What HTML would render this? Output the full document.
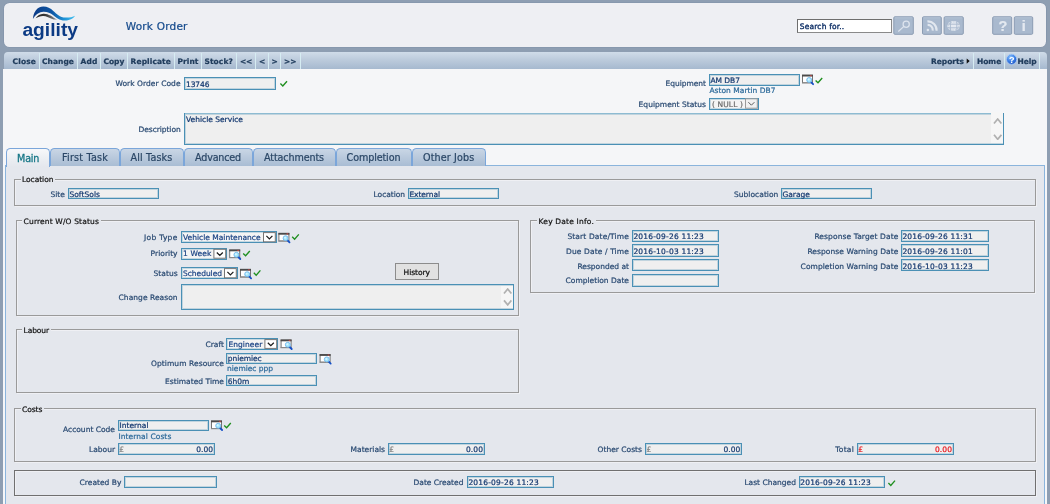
<!DOCTYPE html><html><head><meta charset="utf-8"><title>Work Order</title><style>
html,body{margin:0;padding:0}body{width:1050px;height:504px;overflow:hidden;position:relative;background:#8e9eb2;font-family:'DejaVu Sans','Liberation Sans',sans-serif;}
.t{position:absolute;white-space:nowrap;line-height:1;-webkit-text-stroke:0.22px currentColor;}
#tx{position:absolute;left:0;top:0;width:1050px;height:504px;will-change:transform;transform:translateZ(0);}
</style></head><body>
<div style="position:absolute;left:3.60px;top:2.80px;width:1042.80px;height:43.80px;background:#eeeff3;border-radius:5.5px;box-shadow:0 0 0 0.6px #8091a8;"></div>
<svg style="position:absolute;left:0;top:0" width="90" height="24" viewBox="0 0 90 24">
<defs><linearGradient id="g1" gradientUnits="userSpaceOnUse" x1="33" x2="75" y1="0" y2="0"><stop offset="0" stop-color="#0b3a86"/><stop offset="0.45" stop-color="#0d56a4"/><stop offset="0.75" stop-color="#1f93d6"/><stop offset="1" stop-color="#3fc0f0"/></linearGradient>
<linearGradient id="g2" gradientUnits="userSpaceOnUse" x1="35" x2="57" y1="0" y2="0"><stop offset="0" stop-color="#1c1c1c"/><stop offset="0.5" stop-color="#3a3a3a"/><stop offset="1" stop-color="#8d9299"/></linearGradient></defs>
<path d="M32.9 19 C33.2 15 34.3 12.6 35.6 10.8 C37.6 8 40.4 6.6 43.4 6.6 C47.4 6.6 50.4 8.4 53.3 11 C56.6 13.9 59.6 17.4 65.7 17.6 C69.4 17.7 72.6 17 75.2 15.7 C73.6 18 70.4 20.4 65 20.5 C59.4 20.6 56.4 17.6 53.3 15.2 C50.4 13 47.4 11.7 43.4 11.8 C39.4 11.9 35.4 14.8 32.9 19 Z" fill="url(#g1)"/>
<path d="M35.6 18.2 C37.6 15.6 40 13.8 43.4 13.7 C46.4 13.6 48.4 14.4 50.4 15.6 C52.8 17 54.8 18.6 57.2 19.6 C54.8 19.7 52.8 19.2 51 18.4 C48.6 17.3 46.4 16 43.4 15.9 C40.4 15.8 37.8 16.8 35.6 18.2 Z" fill="url(#g2)"/>
</svg>
<div style="position:absolute;left:797.00px;top:19.00px;width:95.00px;height:14.00px;box-sizing:border-box;background:#fff;border:1px solid #8a8a8a;border-top-color:#6e6e6e;border-left-color:#6e6e6e;"></div>
<svg style="position:absolute;left:0;top:0" width="1050" height="50" viewBox="0 0 1050 50"><rect x="893.8" y="16.8" width="19.5" height="17.5" rx="1.1" fill="#a9b9ce" stroke="#8b9cb3" stroke-width="1"/><line x1="894.8" y1="17.8" x2="912.3" y2="17.8" stroke="#b4c2d4" stroke-width="1"/><rect x="922.5" y="16.8" width="18.799999999999955" height="17.5" rx="1.1" fill="#a9b9ce" stroke="#8b9cb3" stroke-width="1"/><line x1="923.5" y1="17.8" x2="940.3" y2="17.8" stroke="#b4c2d4" stroke-width="1"/><rect x="944.1" y="16.8" width="19.199999999999932" height="17.5" rx="1.1" fill="#a9b9ce" stroke="#8b9cb3" stroke-width="1"/><line x1="945.1" y1="17.8" x2="962.3" y2="17.8" stroke="#b4c2d4" stroke-width="1"/><rect x="992.7" y="16.8" width="19.0" height="17.5" rx="1.1" fill="#a9b9ce" stroke="#8b9cb3" stroke-width="1"/><line x1="993.7" y1="17.8" x2="1010.7" y2="17.8" stroke="#b4c2d4" stroke-width="1"/><rect x="1014.3" y="16.8" width="18.40000000000009" height="17.5" rx="1.1" fill="#a9b9ce" stroke="#8b9cb3" stroke-width="1"/><line x1="1015.3" y1="17.8" x2="1031.7" y2="17.8" stroke="#b4c2d4" stroke-width="1"/><circle cx="906.2" cy="24.2" r="3.1" fill="none" stroke="#dde4ee" stroke-width="1.25"/><line x1="903.9" y1="26.4" x2="898.3" y2="31.5" stroke="#dde4ee" stroke-width="1.25"/><g fill="none" stroke="#e1e7ef" stroke-width="2.1"><path d="M927.6 24.9 A5 5 0 0 1 932.7 30.6"/><path d="M927.4 21.4 A8.8 8.8 0 0 1 936.6 30.8"/></g><circle cx="927.9" cy="29.9" r="1.25" fill="#e1e7ef"/><g><ellipse cx="953.6" cy="26" rx="6.4" ry="5.1" fill="#e4e9f1"/><g stroke="#a9b9ce" stroke-width="0.9"><line x1="946" y1="24.2" x2="961" y2="24.2"/><line x1="946" y1="27.8" x2="961" y2="27.8"/><line x1="950.4" y1="20" x2="950.4" y2="32"/><line x1="956.8" y1="20" x2="956.8" y2="32"/></g><ellipse cx="953.6" cy="26" rx="5.4" ry="4.1" fill="none" stroke="#a9b9ce" stroke-width="0.8" stroke-dasharray="1.2 1.2"/></g></svg>
<div style="position:absolute;left:3.00px;top:68.50px;width:1044.00px;height:435.50px;background:#f5f6f8;"></div>
<div style="position:absolute;left:3.80px;top:52.30px;width:1043.00px;height:16.40px;background:linear-gradient(#d0dce9,#bccbdc 45%,#a6b9cf);border-radius:4px 4px 0 0;"></div>
<div style="position:absolute;left:38.90px;top:52.60px;width:1.00px;height:16.10px;background:#d6ecf2;"></div>
<div style="position:absolute;left:76.90px;top:52.60px;width:1.00px;height:16.10px;background:#d6ecf2;"></div>
<div style="position:absolute;left:99.90px;top:52.60px;width:1.00px;height:16.10px;background:#d6ecf2;"></div>
<div style="position:absolute;left:126.90px;top:52.60px;width:1.00px;height:16.10px;background:#d6ecf2;"></div>
<div style="position:absolute;left:173.50px;top:52.60px;width:1.00px;height:16.10px;background:#d6ecf2;"></div>
<div style="position:absolute;left:200.50px;top:52.60px;width:1.00px;height:16.10px;background:#d6ecf2;"></div>
<div style="position:absolute;left:236.10px;top:52.60px;width:1.00px;height:16.10px;background:#d6ecf2;"></div>
<div style="position:absolute;left:255.10px;top:52.60px;width:1.00px;height:16.10px;background:#d6ecf2;"></div>
<div style="position:absolute;left:267.50px;top:52.60px;width:1.00px;height:16.10px;background:#d6ecf2;"></div>
<div style="position:absolute;left:280.10px;top:52.60px;width:1.00px;height:16.10px;background:#d6ecf2;"></div>
<div style="position:absolute;left:299.90px;top:52.60px;width:1.00px;height:16.10px;background:#d6ecf2;"></div>
<div style="position:absolute;left:972.90px;top:52.60px;width:1.00px;height:16.10px;background:#d6ecf2;"></div>
<div style="position:absolute;left:1004.10px;top:52.60px;width:1.00px;height:16.10px;background:#d6ecf2;"></div>
<div style="position:absolute;left:1039.00px;top:52.60px;width:1.00px;height:16.10px;background:#d6ecf2;"></div>
<svg style="position:absolute;left:965px;top:58px" width="6" height="8" viewBox="0 0 6 8"><path d="M1.7 0.4 L4.7 3.1 L1.7 5.8 Z" fill="#111"/></svg>
<svg style="position:absolute;left:1004px;top:52px;will-change:transform" width="16" height="16" viewBox="1004 52 16 16"><defs><radialGradient id="hg" cx="0.4" cy="0.3" r="0.75"><stop offset="0" stop-color="#8cc4ff"/><stop offset="0.55" stop-color="#3b7fe6"/><stop offset="1" stop-color="#1b50c0"/></radialGradient></defs><circle cx="1011.6" cy="59.3" r="5.1" fill="url(#hg)" stroke="#a9cdf6" stroke-width="0.8"/><text x="1011.7" y="62.6" font-family="Liberation Sans,sans-serif" font-weight="bold" font-size="9.2" fill="#fff" text-anchor="middle">?</text></svg>
<div style="position:absolute;left:184.00px;top:77.30px;width:92.00px;height:12.30px;box-sizing:border-box;background:#efefef;border:1px solid #4a90b5;box-shadow:inset 0 0 0 1px rgba(74,144,181,.28);"></div>
<svg style="position:absolute;left:279px;top:80px" width="10" height="9" viewBox="0 0 10 9"><g transform="translate(0.60 0.40)"><path d="M0.8 3.2 L3.2 5.6 L7.4 0.8" fill="none" stroke="#1f8f1f" stroke-width="1.35"/></g></svg>
<div style="position:absolute;left:184.00px;top:112.60px;width:820.00px;height:32.00px;box-sizing:border-box;background:#efefef;border:1px solid #4a90b5;box-shadow:inset 0 0 0 1px rgba(74,144,181,.28);"></div>
<div style="position:absolute;left:185.00px;top:112.60px;width:818.00px;height:1.00px;background:#8dbbd2;"></div>
<div style="position:absolute;left:991.30px;top:112.00px;width:11.70px;height:31.40px;background:#f6f6f6;"></div>
<svg style="position:absolute;left:992.60px;top:117.60px" width="9.4" height="22.30" viewBox="-1 -1 9.4 22.30"><path d="M0 4.5 L3.7 0 L7.4 4.5" fill="none" stroke="#b0b0b0" stroke-width="1.7"/><path d="M0 15.800000000000011 L3.7 20.30000000000001 L7.4 15.800000000000011" fill="none" stroke="#b0b0b0" stroke-width="1.7"/></svg>
<div style="position:absolute;left:709.00px;top:74.00px;width:90.60px;height:11.70px;box-sizing:border-box;background:#efefef;border:1px solid #4a90b5;box-shadow:inset 0 0 0 1px rgba(74,144,181,.28);"></div>
<svg style="position:absolute;left:802px;top:74px" width="14" height="13" viewBox="0 0 14 13"><g transform="translate(0.00 0.70)"><rect x="0.5" y="0.5" width="10" height="7.6" fill="#fff" stroke="#747474" stroke-width="1"/><line x1="0" y1="8.1" x2="11" y2="8.1" stroke="#8a8a8a" stroke-width="1"/><rect x="0" y="0" width="11" height="1.8" fill="#4a4a4a"/><rect x="8.2" y="0.4" width="1.5" height="1.1" fill="#c44"/><line x1="9.1" y1="7.5" x2="11.1" y2="9.5" stroke="#1450c8" stroke-width="1.8" stroke-linecap="round"/><circle cx="7.2" cy="5.3" r="2.5" fill="#a6e6fb" stroke="#6ab0ea" stroke-width="0.8"/><circle cx="6.7" cy="4.8" r="1" fill="#d6f6ff"/></g></svg>
<svg style="position:absolute;left:814px;top:77px" width="10" height="9" viewBox="0 0 10 9"><g transform="translate(0.80 0.20)"><path d="M0.8 3.2 L3.2 5.6 L7.4 0.8" fill="none" stroke="#1f8f1f" stroke-width="1.35"/></g></svg>
<div style="position:absolute;left:709.00px;top:97.50px;width:49.60px;height:12.00px;box-sizing:border-box;background:#f4f4f4;border:1px solid #4a90b5;box-shadow:inset 0 0 0 1px rgba(74,144,181,.28);"></div>
<svg style="position:absolute;left:0;top:0" width="1050" height="504" viewBox="0 0 1050 504"><rect x="745.50" y="98.80" width="11.80" height="9.40" fill="#f1f1f1" stroke="#9a9a9a" stroke-width="1"/><path d="M748.40 102.20 l3 3 l3 -3" fill="none" stroke="#5a5a5a" stroke-width="1.0"/></svg>
<div style="position:absolute;left:5.00px;top:165.40px;width:1039.60px;height:338.60px;box-sizing:border-box;background:#e4e7ed;border:1px solid #8ab4dc;border-bottom:none;"></div>
<div style="position:absolute;left:50.30px;top:148.20px;width:69.30px;height:17.40px;box-sizing:border-box;border:1px solid #7ba6da;border-bottom:none;border-radius:4.5px 4.5px 0 0;background:linear-gradient(#c9d6e5,#b9c9dc 50%,#a9bdd4);"></div>
<div style="position:absolute;left:119.60px;top:148.20px;width:64.00px;height:17.40px;box-sizing:border-box;border:1px solid #7ba6da;border-bottom:none;border-radius:4.5px 4.5px 0 0;background:linear-gradient(#c9d6e5,#b9c9dc 50%,#a9bdd4);"></div>
<div style="position:absolute;left:183.60px;top:148.20px;width:69.20px;height:17.40px;box-sizing:border-box;border:1px solid #7ba6da;border-bottom:none;border-radius:4.5px 4.5px 0 0;background:linear-gradient(#c9d6e5,#b9c9dc 50%,#a9bdd4);"></div>
<div style="position:absolute;left:252.80px;top:148.20px;width:82.80px;height:17.40px;box-sizing:border-box;border:1px solid #7ba6da;border-bottom:none;border-radius:4.5px 4.5px 0 0;background:linear-gradient(#c9d6e5,#b9c9dc 50%,#a9bdd4);"></div>
<div style="position:absolute;left:335.60px;top:148.20px;width:76.20px;height:17.40px;box-sizing:border-box;border:1px solid #7ba6da;border-bottom:none;border-radius:4.5px 4.5px 0 0;background:linear-gradient(#c9d6e5,#b9c9dc 50%,#a9bdd4);"></div>
<div style="position:absolute;left:411.80px;top:148.20px;width:73.80px;height:17.40px;box-sizing:border-box;border:1px solid #7ba6da;border-bottom:none;border-radius:4.5px 4.5px 0 0;background:linear-gradient(#c9d6e5,#b9c9dc 50%,#a9bdd4);"></div>
<div style="position:absolute;left:6.00px;top:148.20px;width:44.30px;height:18.40px;box-sizing:border-box;border:1px solid #7ba6da;border-bottom:none;border-radius:4.5px 4.5px 0 0;background:linear-gradient(#f7f8fa,#eceff3 50%,#e4e7ed);"></div>
<div style="position:absolute;left:14.20px;top:179.00px;width:1021.60px;height:27.00px;box-sizing:border-box;border:1px solid #9a9a9a;box-shadow:inset 1px 1px 0 rgba(255,255,255,.4), 1px 1px 0 rgba(255,255,255,.4);"></div>
<div style="position:absolute;left:20.50px;top:177.00px;width:34.90px;height:5.00px;background:#e4e7ed;"></div>
<div style="position:absolute;left:68.00px;top:188.30px;width:90.60px;height:10.60px;box-sizing:border-box;background:#efefef;border:1px solid #4a90b5;box-shadow:inset 0 0 0 1px rgba(74,144,181,.28);"></div>
<div style="position:absolute;left:408.00px;top:188.30px;width:91.00px;height:10.60px;box-sizing:border-box;background:#efefef;border:1px solid #4a90b5;box-shadow:inset 0 0 0 1px rgba(74,144,181,.28);"></div>
<div style="position:absolute;left:781.00px;top:188.30px;width:90.60px;height:10.60px;box-sizing:border-box;background:#efefef;border:1px solid #4a90b5;box-shadow:inset 0 0 0 1px rgba(74,144,181,.28);"></div>
<div style="position:absolute;left:15.80px;top:220.20px;width:503.00px;height:95.40px;box-sizing:border-box;border:1px solid #9a9a9a;box-shadow:inset 1px 1px 0 rgba(255,255,255,.4), 1px 1px 0 rgba(255,255,255,.4);"></div>
<div style="position:absolute;left:22.10px;top:218.20px;width:78.90px;height:5.00px;background:#e4e7ed;"></div>
<div style="position:absolute;left:181.00px;top:231.30px;width:95.60px;height:11.80px;box-sizing:border-box;background:#f4f4f4;border:1px solid #4a90b5;box-shadow:inset 0 0 0 1px rgba(74,144,181,.28);"></div>
<svg style="position:absolute;left:0;top:0" width="1050" height="504" viewBox="0 0 1050 504"><rect x="263.50" y="232.60" width="11.80" height="9.20" fill="#fff" stroke="#767676" stroke-width="1"/><path d="M266.40 235.90 l3 3 l3 -3" fill="none" stroke="#1c1c1c" stroke-width="1.25"/></svg>
<svg style="position:absolute;left:278px;top:232px" width="14" height="13" viewBox="0 0 14 13"><g transform="translate(0.40 0.90)"><rect x="0.5" y="0.5" width="10" height="7.6" fill="#fff" stroke="#747474" stroke-width="1"/><line x1="0" y1="8.1" x2="11" y2="8.1" stroke="#8a8a8a" stroke-width="1"/><rect x="0" y="0" width="11" height="1.8" fill="#4a4a4a"/><rect x="8.2" y="0.4" width="1.5" height="1.1" fill="#c44"/><line x1="9.1" y1="7.5" x2="11.1" y2="9.5" stroke="#1450c8" stroke-width="1.8" stroke-linecap="round"/><circle cx="7.2" cy="5.3" r="2.5" fill="#a6e6fb" stroke="#6ab0ea" stroke-width="0.8"/><circle cx="6.7" cy="4.8" r="1" fill="#d6f6ff"/></g></svg>
<svg style="position:absolute;left:291px;top:233px" width="10" height="9" viewBox="0 0 10 9"><g transform="translate(0.40 0.60)"><path d="M0.8 3.2 L3.2 5.6 L7.4 0.8" fill="none" stroke="#1f8f1f" stroke-width="1.35"/></g></svg>
<div style="position:absolute;left:181.00px;top:248.00px;width:46.00px;height:11.50px;box-sizing:border-box;background:#f4f4f4;border:1px solid #4a90b5;box-shadow:inset 0 0 0 1px rgba(74,144,181,.28);"></div>
<svg style="position:absolute;left:0;top:0" width="1050" height="504" viewBox="0 0 1050 504"><rect x="213.90" y="249.30" width="11.80" height="8.90" fill="#fff" stroke="#767676" stroke-width="1"/><path d="M216.80 252.45 l3 3 l3 -3" fill="none" stroke="#1c1c1c" stroke-width="1.25"/></svg>
<svg style="position:absolute;left:229px;top:249px" width="14" height="13" viewBox="0 0 14 13"><g transform="translate(0.20 0.50)"><rect x="0.5" y="0.5" width="10" height="7.6" fill="#fff" stroke="#747474" stroke-width="1"/><line x1="0" y1="8.1" x2="11" y2="8.1" stroke="#8a8a8a" stroke-width="1"/><rect x="0" y="0" width="11" height="1.8" fill="#4a4a4a"/><rect x="8.2" y="0.4" width="1.5" height="1.1" fill="#c44"/><line x1="9.1" y1="7.5" x2="11.1" y2="9.5" stroke="#1450c8" stroke-width="1.8" stroke-linecap="round"/><circle cx="7.2" cy="5.3" r="2.5" fill="#a6e6fb" stroke="#6ab0ea" stroke-width="0.8"/><circle cx="6.7" cy="4.8" r="1" fill="#d6f6ff"/></g></svg>
<svg style="position:absolute;left:242px;top:250px" width="10" height="9" viewBox="0 0 10 9"><g transform="translate(0.40 0.20)"><path d="M0.8 3.2 L3.2 5.6 L7.4 0.8" fill="none" stroke="#1f8f1f" stroke-width="1.35"/></g></svg>
<div style="position:absolute;left:181.00px;top:267.30px;width:56.60px;height:11.80px;box-sizing:border-box;background:#f4f4f4;border:1px solid #4a90b5;box-shadow:inset 0 0 0 1px rgba(74,144,181,.28);"></div>
<svg style="position:absolute;left:0;top:0" width="1050" height="504" viewBox="0 0 1050 504"><rect x="224.50" y="268.60" width="11.80" height="9.20" fill="#fff" stroke="#767676" stroke-width="1"/><path d="M227.40 271.90 l3 3 l3 -3" fill="none" stroke="#1c1c1c" stroke-width="1.25"/></svg>
<svg style="position:absolute;left:240px;top:268px" width="14" height="13" viewBox="0 0 14 13"><g transform="translate(0.00 0.90)"><rect x="0.5" y="0.5" width="10" height="7.6" fill="#fff" stroke="#747474" stroke-width="1"/><line x1="0" y1="8.1" x2="11" y2="8.1" stroke="#8a8a8a" stroke-width="1"/><rect x="0" y="0" width="11" height="1.8" fill="#4a4a4a"/><rect x="8.2" y="0.4" width="1.5" height="1.1" fill="#c44"/><line x1="9.1" y1="7.5" x2="11.1" y2="9.5" stroke="#1450c8" stroke-width="1.8" stroke-linecap="round"/><circle cx="7.2" cy="5.3" r="2.5" fill="#a6e6fb" stroke="#6ab0ea" stroke-width="0.8"/><circle cx="6.7" cy="4.8" r="1" fill="#d6f6ff"/></g></svg>
<svg style="position:absolute;left:253px;top:269px" width="10" height="9" viewBox="0 0 10 9"><g transform="translate(0.00 0.60)"><path d="M0.8 3.2 L3.2 5.6 L7.4 0.8" fill="none" stroke="#1f8f1f" stroke-width="1.35"/></g></svg>
<div style="position:absolute;left:395.00px;top:263.00px;width:44.00px;height:16.60px;box-sizing:border-box;background:#e1e1e1;border:1px solid #8c8c8c;"></div>
<div style="position:absolute;left:181.00px;top:284.40px;width:332.60px;height:25.40px;box-sizing:border-box;background:#efefef;border:1px solid #4a90b5;box-shadow:inset 0 0 0 1px rgba(74,144,181,.28);"></div>
<div style="position:absolute;left:501.30px;top:285.60px;width:11.30px;height:22.80px;background:#f6f6f6;"></div>
<svg style="position:absolute;left:502.80px;top:287.80px" width="9.4" height="17.90" viewBox="-1 -1 9.4 17.90"><path d="M0 4.5 L3.7 0 L7.4 4.5" fill="none" stroke="#b0b0b0" stroke-width="1.7"/><path d="M0 11.399999999999977 L3.7 15.899999999999977 L7.4 11.399999999999977" fill="none" stroke="#b0b0b0" stroke-width="1.7"/></svg>
<div style="position:absolute;left:530.40px;top:220.40px;width:504.20px;height:72.20px;box-sizing:border-box;border:1px solid #9a9a9a;box-shadow:inset 1px 1px 0 rgba(255,255,255,.4), 1px 1px 0 rgba(255,255,255,.4);"></div>
<div style="position:absolute;left:537.10px;top:218.40px;width:58.90px;height:5.00px;background:#e4e7ed;"></div>
<div style="position:absolute;left:632.00px;top:230.00px;width:87.00px;height:11.70px;box-sizing:border-box;background:#efefef;border:1px solid #4a90b5;box-shadow:inset 0 0 0 1px rgba(74,144,181,.28);"></div>
<div style="position:absolute;left:632.00px;top:244.40px;width:87.00px;height:12.30px;box-sizing:border-box;background:#efefef;border:1px solid #4a90b5;box-shadow:inset 0 0 0 1px rgba(74,144,181,.28);"></div>
<div style="position:absolute;left:632.00px;top:259.40px;width:87.00px;height:12.10px;box-sizing:border-box;background:#efefef;border:1px solid #4a90b5;box-shadow:inset 0 0 0 1px rgba(74,144,181,.28);"></div>
<div style="position:absolute;left:632.00px;top:274.40px;width:87.00px;height:12.30px;box-sizing:border-box;background:#efefef;border:1px solid #4a90b5;box-shadow:inset 0 0 0 1px rgba(74,144,181,.28);"></div>
<div style="position:absolute;left:901.00px;top:230.00px;width:87.60px;height:11.70px;box-sizing:border-box;background:#efefef;border:1px solid #4a90b5;box-shadow:inset 0 0 0 1px rgba(74,144,181,.28);"></div>
<div style="position:absolute;left:901.00px;top:244.40px;width:87.60px;height:12.30px;box-sizing:border-box;background:#efefef;border:1px solid #4a90b5;box-shadow:inset 0 0 0 1px rgba(74,144,181,.28);"></div>
<div style="position:absolute;left:901.00px;top:259.40px;width:87.60px;height:12.10px;box-sizing:border-box;background:#efefef;border:1px solid #4a90b5;box-shadow:inset 0 0 0 1px rgba(74,144,181,.28);"></div>
<div style="position:absolute;left:15.80px;top:329.20px;width:503.00px;height:63.80px;box-sizing:border-box;border:1px solid #9a9a9a;box-shadow:inset 1px 1px 0 rgba(255,255,255,.4), 1px 1px 0 rgba(255,255,255,.4);"></div>
<div style="position:absolute;left:22.10px;top:327.20px;width:28.90px;height:5.00px;background:#e4e7ed;"></div>
<div style="position:absolute;left:226.40px;top:338.30px;width:51.60px;height:11.40px;box-sizing:border-box;background:#f4f4f4;border:1px solid #4a90b5;box-shadow:inset 0 0 0 1px rgba(74,144,181,.28);"></div>
<svg style="position:absolute;left:0;top:0" width="1050" height="504" viewBox="0 0 1050 504"><rect x="264.90" y="339.60" width="11.80" height="8.80" fill="#fff" stroke="#767676" stroke-width="1"/><path d="M267.80 342.70 l3 3 l3 -3" fill="none" stroke="#1c1c1c" stroke-width="1.25"/></svg>
<svg style="position:absolute;left:280px;top:339px" width="14" height="13" viewBox="0 0 14 13"><g transform="translate(0.60 0.50)"><rect x="0.5" y="0.5" width="10" height="7.6" fill="#fff" stroke="#747474" stroke-width="1"/><line x1="0" y1="8.1" x2="11" y2="8.1" stroke="#8a8a8a" stroke-width="1"/><rect x="0" y="0" width="11" height="1.8" fill="#4a4a4a"/><rect x="8.2" y="0.4" width="1.5" height="1.1" fill="#c44"/><line x1="9.1" y1="7.5" x2="11.1" y2="9.5" stroke="#1450c8" stroke-width="1.8" stroke-linecap="round"/><circle cx="7.2" cy="5.3" r="2.5" fill="#a6e6fb" stroke="#6ab0ea" stroke-width="0.8"/><circle cx="6.7" cy="4.8" r="1" fill="#d6f6ff"/></g></svg>
<div style="position:absolute;left:226.40px;top:353.30px;width:91.00px;height:10.50px;box-sizing:border-box;background:#efefef;border:1px solid #4a90b5;box-shadow:inset 0 0 0 1px rgba(74,144,181,.28);"></div>
<svg style="position:absolute;left:319px;top:354px" width="14" height="13" viewBox="0 0 14 13"><g transform="translate(0.60 0.10)"><rect x="0.5" y="0.5" width="10" height="7.6" fill="#fff" stroke="#747474" stroke-width="1"/><line x1="0" y1="8.1" x2="11" y2="8.1" stroke="#8a8a8a" stroke-width="1"/><rect x="0" y="0" width="11" height="1.8" fill="#4a4a4a"/><rect x="8.2" y="0.4" width="1.5" height="1.1" fill="#c44"/><line x1="9.1" y1="7.5" x2="11.1" y2="9.5" stroke="#1450c8" stroke-width="1.8" stroke-linecap="round"/><circle cx="7.2" cy="5.3" r="2.5" fill="#a6e6fb" stroke="#6ab0ea" stroke-width="0.8"/><circle cx="6.7" cy="4.8" r="1" fill="#d6f6ff"/></g></svg>
<div style="position:absolute;left:226.40px;top:375.30px;width:91.00px;height:10.50px;box-sizing:border-box;background:#efefef;border:1px solid #4a90b5;box-shadow:inset 0 0 0 1px rgba(74,144,181,.28);"></div>
<div style="position:absolute;left:14.20px;top:408.20px;width:1021.60px;height:53.60px;box-sizing:border-box;border:1px solid #9a9a9a;box-shadow:inset 1px 1px 0 rgba(255,255,255,.4), 1px 1px 0 rgba(255,255,255,.4);"></div>
<div style="position:absolute;left:20.50px;top:406.20px;width:23.90px;height:5.00px;background:#e4e7ed;"></div>
<div style="position:absolute;left:118.00px;top:420.30px;width:90.60px;height:10.50px;box-sizing:border-box;background:#efefef;border:1px solid #4a90b5;box-shadow:inset 0 0 0 1px rgba(74,144,181,.28);"></div>
<svg style="position:absolute;left:211px;top:420px" width="14" height="13" viewBox="0 0 14 13"><g transform="translate(0.00 0.50)"><rect x="0.5" y="0.5" width="10" height="7.6" fill="#fff" stroke="#747474" stroke-width="1"/><line x1="0" y1="8.1" x2="11" y2="8.1" stroke="#8a8a8a" stroke-width="1"/><rect x="0" y="0" width="11" height="1.8" fill="#4a4a4a"/><rect x="8.2" y="0.4" width="1.5" height="1.1" fill="#c44"/><line x1="9.1" y1="7.5" x2="11.1" y2="9.5" stroke="#1450c8" stroke-width="1.8" stroke-linecap="round"/><circle cx="7.2" cy="5.3" r="2.5" fill="#a6e6fb" stroke="#6ab0ea" stroke-width="0.8"/><circle cx="6.7" cy="4.8" r="1" fill="#d6f6ff"/></g></svg>
<svg style="position:absolute;left:223px;top:422px" width="10" height="9" viewBox="0 0 10 9"><g transform="translate(0.40 0.20)"><path d="M0.8 3.2 L3.2 5.6 L7.4 0.8" fill="none" stroke="#1f8f1f" stroke-width="1.35"/></g></svg>
<div style="position:absolute;left:118.00px;top:443.30px;width:96.80px;height:11.30px;box-sizing:border-box;background:#efefef;border:1px solid #4a90b5;box-shadow:inset 0 0 0 1px rgba(74,144,181,.28);"></div>
<div style="position:absolute;left:388.00px;top:443.30px;width:96.60px;height:11.30px;box-sizing:border-box;background:#efefef;border:1px solid #4a90b5;box-shadow:inset 0 0 0 1px rgba(74,144,181,.28);"></div>
<div style="position:absolute;left:645.40px;top:443.30px;width:96.60px;height:11.30px;box-sizing:border-box;background:#efefef;border:1px solid #4a90b5;box-shadow:inset 0 0 0 1px rgba(74,144,181,.28);"></div>
<div style="position:absolute;left:857.00px;top:443.30px;width:96.60px;height:11.30px;box-sizing:border-box;background:#efefef;border:1px solid #4a90b5;box-shadow:inset 0 0 0 1px rgba(74,144,181,.28);"></div>
<div style="position:absolute;left:14.20px;top:470.20px;width:1021.60px;height:25.60px;box-sizing:border-box;border:1px solid #707070;box-shadow:inset 1px 1px 0 rgba(255,255,255,.4), 1px 1px 0 rgba(255,255,255,.4);"></div>
<div style="position:absolute;left:124.40px;top:476.30px;width:92.40px;height:11.40px;box-sizing:border-box;background:#efefef;border:1px solid #4a90b5;box-shadow:inset 0 0 0 1px rgba(74,144,181,.28);"></div>
<div style="position:absolute;left:467.00px;top:476.30px;width:86.60px;height:11.40px;box-sizing:border-box;background:#efefef;border:1px solid #4a90b5;box-shadow:inset 0 0 0 1px rgba(74,144,181,.28);"></div>
<div style="position:absolute;left:798.80px;top:476.30px;width:86.60px;height:11.40px;box-sizing:border-box;background:#efefef;border:1px solid #4a90b5;box-shadow:inset 0 0 0 1px rgba(74,144,181,.28);"></div>
<svg style="position:absolute;left:887px;top:479px" width="10" height="9" viewBox="0 0 10 9"><g transform="translate(0.60 0.80)"><path d="M0.8 3.2 L3.2 5.6 L7.4 0.8" fill="none" stroke="#1f8f1f" stroke-width="1.35"/></g></svg>
<div id="tx">
<span class="t" style="left:22.40px;top:20.45px;font-size:19.2px;font-weight:bold;color:#0b3a84;font-family:'Liberation Sans',sans-serif;letter-spacing:0.021px;-webkit-text-stroke:0;">agility</span>
<span class="t" style="left:125.70px;top:21.12px;font-size:10.5px;font-weight:normal;color:#154a8c;font-family:'DejaVu Sans','Liberation Sans',sans-serif;letter-spacing:0.213px;">Work Order</span>
<span class="t" style="left:799.80px;top:23.26px;font-size:7.5px;font-weight:normal;color:#0e2f66;font-family:'DejaVu Sans','Liberation Sans',sans-serif;letter-spacing:0.171px;-webkit-text-stroke:0.35px currentColor;">Search for..</span>
<span class="t" style="left:998.50px;top:18.73px;font-size:14.5px;font-weight:bold;color:#e4e9f0;font-family:'Liberation Sans',sans-serif;letter-spacing:-0.600px;">?</span>
<span class="t" style="left:1021.70px;top:18.73px;font-size:14.5px;font-weight:bold;color:#e4e9f0;font-family:'Liberation Sans',sans-serif;letter-spacing:-0.131px;">i</span>
<span class="t" style="left:12.60px;top:58.26px;font-size:7.5px;font-weight:bold;color:#203c5c;font-family:'DejaVu Sans','Liberation Sans',sans-serif;letter-spacing:0.124px;">Close</span>
<span class="t" style="left:42.00px;top:58.26px;font-size:7.5px;font-weight:bold;color:#203c5c;font-family:'DejaVu Sans','Liberation Sans',sans-serif;letter-spacing:0.049px;">Change</span>
<span class="t" style="left:80.60px;top:58.26px;font-size:7.5px;font-weight:bold;color:#203c5c;font-family:'DejaVu Sans','Liberation Sans',sans-serif;letter-spacing:0.084px;">Add</span>
<span class="t" style="left:103.40px;top:58.26px;font-size:7.5px;font-weight:bold;color:#203c5c;font-family:'DejaVu Sans','Liberation Sans',sans-serif;letter-spacing:0.020px;">Copy</span>
<span class="t" style="left:130.60px;top:58.26px;font-size:7.5px;font-weight:bold;color:#203c5c;font-family:'DejaVu Sans','Liberation Sans',sans-serif;letter-spacing:0.093px;">Replicate</span>
<span class="t" style="left:177.50px;top:58.26px;font-size:7.5px;font-weight:bold;color:#203c5c;font-family:'DejaVu Sans','Liberation Sans',sans-serif;letter-spacing:0.059px;">Print</span>
<span class="t" style="left:204.40px;top:58.26px;font-size:7.5px;font-weight:bold;color:#203c5c;font-family:'DejaVu Sans','Liberation Sans',sans-serif;letter-spacing:0.110px;">Stock?</span>
<span class="t" style="left:240.00px;top:58.26px;font-size:7.5px;font-weight:bold;color:#203c5c;font-family:'DejaVu Sans','Liberation Sans',sans-serif;letter-spacing:-0.289px;">&lt;&lt;</span>
<span class="t" style="left:259.00px;top:58.26px;font-size:7.5px;font-weight:bold;color:#203c5c;font-family:'DejaVu Sans','Liberation Sans',sans-serif;letter-spacing:-0.600px;">&lt;</span>
<span class="t" style="left:271.60px;top:58.26px;font-size:7.5px;font-weight:bold;color:#203c5c;font-family:'DejaVu Sans','Liberation Sans',sans-serif;letter-spacing:-0.600px;">&gt;</span>
<span class="t" style="left:284.00px;top:58.26px;font-size:7.5px;font-weight:bold;color:#203c5c;font-family:'DejaVu Sans','Liberation Sans',sans-serif;letter-spacing:-0.089px;">&gt;&gt;</span>
<span class="t" style="left:931.00px;top:58.26px;font-size:7.5px;font-weight:bold;color:#203c5c;font-family:'DejaVu Sans','Liberation Sans',sans-serif;letter-spacing:-0.020px;">Reports</span>
<span class="t" style="left:977.00px;top:58.26px;font-size:7.5px;font-weight:bold;color:#203c5c;font-family:'DejaVu Sans','Liberation Sans',sans-serif;letter-spacing:-0.036px;">Home</span>
<span class="t" style="left:1017.50px;top:58.26px;font-size:7.5px;font-weight:bold;color:#203c5c;font-family:'DejaVu Sans','Liberation Sans',sans-serif;letter-spacing:-0.078px;">Help</span>
<span class="t" style="left:115.40px;top:80.25px;font-size:7.5px;font-weight:normal;color:#2a4a72;font-family:'DejaVu Sans','Liberation Sans',sans-serif;letter-spacing:0.061px;">Work Order Code</span>
<span class="t" style="left:186.10px;top:80.85px;font-size:7.5px;font-weight:normal;color:#12376f;font-family:'DejaVu Sans','Liberation Sans',sans-serif;letter-spacing:-0.132px;">13746</span>
<span class="t" style="left:138.60px;top:126.06px;font-size:7.5px;font-weight:normal;color:#2a4a72;font-family:'DejaVu Sans','Liberation Sans',sans-serif;letter-spacing:-0.065px;">Description</span>
<span class="t" style="left:186.00px;top:116.25px;font-size:7.5px;font-weight:normal;color:#12376f;font-family:'DejaVu Sans','Liberation Sans',sans-serif;letter-spacing:0.004px;">Vehicle Service</span>
<span class="t" style="left:665.60px;top:80.05px;font-size:7.5px;font-weight:normal;color:#2a4a72;font-family:'DejaVu Sans','Liberation Sans',sans-serif;letter-spacing:-0.035px;">Equipment</span>
<span class="t" style="left:710.40px;top:76.66px;font-size:7.5px;font-weight:normal;color:#12376f;font-family:'DejaVu Sans','Liberation Sans',sans-serif;letter-spacing:-0.015px;">AM DB7</span>
<span class="t" style="left:709.40px;top:87.25px;font-size:7.5px;font-weight:normal;color:#2d6a9a;font-family:'DejaVu Sans','Liberation Sans',sans-serif;letter-spacing:0.030px;">Aston Martin DB7</span>
<span class="t" style="left:638.60px;top:100.85px;font-size:7.5px;font-weight:normal;color:#2a4a72;font-family:'DejaVu Sans','Liberation Sans',sans-serif;letter-spacing:0.025px;">Equipment Status</span>
<span class="t" style="left:712.00px;top:100.66px;font-size:7.5px;font-weight:normal;color:#6d6d6d;font-family:'DejaVu Sans','Liberation Sans',sans-serif;letter-spacing:0.115px;">( NULL )</span>
<span class="t" style="left:62.00px;top:153.48px;font-size:9.6px;font-weight:normal;color:#2b4766;font-family:'DejaVu Sans','Liberation Sans',sans-serif;letter-spacing:0.205px;">First Task</span>
<span class="t" style="left:130.60px;top:153.48px;font-size:9.6px;font-weight:normal;color:#2b4766;font-family:'DejaVu Sans','Liberation Sans',sans-serif;letter-spacing:0.127px;">All Tasks</span>
<span class="t" style="left:195.00px;top:153.48px;font-size:9.6px;font-weight:normal;color:#2b4766;font-family:'DejaVu Sans','Liberation Sans',sans-serif;letter-spacing:-0.174px;">Advanced</span>
<span class="t" style="left:264.00px;top:153.48px;font-size:9.6px;font-weight:normal;color:#2b4766;font-family:'DejaVu Sans','Liberation Sans',sans-serif;letter-spacing:-0.114px;">Attachments</span>
<span class="t" style="left:346.60px;top:153.48px;font-size:9.6px;font-weight:normal;color:#2b4766;font-family:'DejaVu Sans','Liberation Sans',sans-serif;letter-spacing:-0.115px;">Completion</span>
<span class="t" style="left:423.00px;top:153.48px;font-size:9.6px;font-weight:normal;color:#2b4766;font-family:'DejaVu Sans','Liberation Sans',sans-serif;letter-spacing:0.132px;">Other Jobs</span>
<span class="t" style="left:17.00px;top:153.68px;font-size:9.6px;font-weight:normal;color:#157686;font-family:'DejaVu Sans','Liberation Sans',sans-serif;letter-spacing:-0.152px;-webkit-text-stroke:0.3px currentColor;">Main</span>
<span class="t" style="left:22.00px;top:176.45px;font-size:7.5px;font-weight:normal;color:#141414;font-family:'DejaVu Sans','Liberation Sans',sans-serif;letter-spacing:-0.042px;">Location</span>
<span class="t" style="left:50.40px;top:190.85px;font-size:7.5px;font-weight:normal;color:#2a4a72;font-family:'DejaVu Sans','Liberation Sans',sans-serif;letter-spacing:0.048px;">Site</span>
<span class="t" style="left:69.40px;top:190.85px;font-size:7.5px;font-weight:normal;color:#12376f;font-family:'DejaVu Sans','Liberation Sans',sans-serif;letter-spacing:0.057px;">SoftSols</span>
<span class="t" style="left:373.60px;top:190.85px;font-size:7.5px;font-weight:normal;color:#2a4a72;font-family:'DejaVu Sans','Liberation Sans',sans-serif;letter-spacing:-0.042px;">Location</span>
<span class="t" style="left:409.40px;top:190.85px;font-size:7.5px;font-weight:normal;color:#12376f;font-family:'DejaVu Sans','Liberation Sans',sans-serif;letter-spacing:-0.066px;">External</span>
<span class="t" style="left:734.00px;top:190.85px;font-size:7.5px;font-weight:normal;color:#2a4a72;font-family:'DejaVu Sans','Liberation Sans',sans-serif;letter-spacing:0.032px;">Sublocation</span>
<span class="t" style="left:782.40px;top:190.85px;font-size:7.5px;font-weight:normal;color:#12376f;font-family:'DejaVu Sans','Liberation Sans',sans-serif;letter-spacing:0.022px;">Garage</span>
<span class="t" style="left:23.60px;top:217.65px;font-size:7.5px;font-weight:normal;color:#141414;font-family:'DejaVu Sans','Liberation Sans',sans-serif;letter-spacing:0.151px;">Current W/O Status</span>
<span class="t" style="left:144.00px;top:233.85px;font-size:7.5px;font-weight:normal;color:#2a4a72;font-family:'DejaVu Sans','Liberation Sans',sans-serif;letter-spacing:0.304px;">Job Type</span>
<span class="t" style="left:183.00px;top:233.85px;font-size:7.5px;font-weight:normal;color:#1b4384;font-family:'DejaVu Sans','Liberation Sans',sans-serif;letter-spacing:0.004px;">Vehicle Maintenance</span>
<span class="t" style="left:150.60px;top:250.25px;font-size:7.5px;font-weight:normal;color:#2a4a72;font-family:'DejaVu Sans','Liberation Sans',sans-serif;letter-spacing:0.037px;">Priority</span>
<span class="t" style="left:183.00px;top:250.25px;font-size:7.5px;font-weight:normal;color:#1b4384;font-family:'DejaVu Sans','Liberation Sans',sans-serif;letter-spacing:0.114px;">1 Week</span>
<span class="t" style="left:153.60px;top:269.86px;font-size:7.5px;font-weight:normal;color:#2a4a72;font-family:'DejaVu Sans','Liberation Sans',sans-serif;letter-spacing:0.016px;">Status</span>
<span class="t" style="left:183.00px;top:269.86px;font-size:7.5px;font-weight:normal;color:#1b4384;font-family:'DejaVu Sans','Liberation Sans',sans-serif;letter-spacing:-0.026px;">Scheduled</span>
<span class="t" style="left:403.60px;top:268.86px;font-size:7.5px;font-weight:normal;color:#111;font-family:'DejaVu Sans','Liberation Sans',sans-serif;letter-spacing:-0.041px;">History</span>
<span class="t" style="left:118.60px;top:294.25px;font-size:7.5px;font-weight:normal;color:#2a4a72;font-family:'DejaVu Sans','Liberation Sans',sans-serif;letter-spacing:0.043px;">Change Reason</span>
<span class="t" style="left:538.60px;top:217.85px;font-size:7.5px;font-weight:normal;color:#141414;font-family:'DejaVu Sans','Liberation Sans',sans-serif;letter-spacing:0.189px;">Key Date Info.</span>
<span class="t" style="left:567.40px;top:232.85px;font-size:7.5px;font-weight:normal;color:#2a4a72;font-family:'DejaVu Sans','Liberation Sans',sans-serif;letter-spacing:0.139px;">Start Date/Time</span>
<span class="t" style="left:633.40px;top:232.85px;font-size:7.5px;font-weight:normal;color:#12376f;font-family:'DejaVu Sans','Liberation Sans',sans-serif;letter-spacing:0.188px;">2016-09-26 11:23</span>
<span class="t" style="left:566.00px;top:247.85px;font-size:7.5px;font-weight:normal;color:#2a4a72;font-family:'DejaVu Sans','Liberation Sans',sans-serif;letter-spacing:0.126px;">Due Date / Time</span>
<span class="t" style="left:633.40px;top:247.85px;font-size:7.5px;font-weight:normal;color:#12376f;font-family:'DejaVu Sans','Liberation Sans',sans-serif;letter-spacing:0.188px;">2016-10-03 11:23</span>
<span class="t" style="left:577.40px;top:262.65px;font-size:7.5px;font-weight:normal;color:#2a4a72;font-family:'DejaVu Sans','Liberation Sans',sans-serif;letter-spacing:0.003px;">Responded at</span>
<span class="t" style="left:565.60px;top:277.25px;font-size:7.5px;font-weight:normal;color:#2a4a72;font-family:'DejaVu Sans','Liberation Sans',sans-serif;letter-spacing:0.008px;">Completion Date</span>
<span class="t" style="left:814.40px;top:232.85px;font-size:7.5px;font-weight:normal;color:#2a4a72;font-family:'DejaVu Sans','Liberation Sans',sans-serif;letter-spacing:0.104px;">Response Target Date</span>
<span class="t" style="left:902.40px;top:232.85px;font-size:7.5px;font-weight:normal;color:#12376f;font-family:'DejaVu Sans','Liberation Sans',sans-serif;letter-spacing:0.188px;">2016-09-26 11:31</span>
<span class="t" style="left:807.40px;top:247.85px;font-size:7.5px;font-weight:normal;color:#2a4a72;font-family:'DejaVu Sans','Liberation Sans',sans-serif;letter-spacing:0.068px;">Response Warning Date</span>
<span class="t" style="left:902.40px;top:247.85px;font-size:7.5px;font-weight:normal;color:#12376f;font-family:'DejaVu Sans','Liberation Sans',sans-serif;letter-spacing:0.188px;">2016-09-26 11:01</span>
<span class="t" style="left:800.60px;top:262.65px;font-size:7.5px;font-weight:normal;color:#2a4a72;font-family:'DejaVu Sans','Liberation Sans',sans-serif;letter-spacing:0.057px;">Completion Warning Date</span>
<span class="t" style="left:902.40px;top:262.65px;font-size:7.5px;font-weight:normal;color:#12376f;font-family:'DejaVu Sans','Liberation Sans',sans-serif;letter-spacing:0.188px;">2016-10-03 11:23</span>
<span class="t" style="left:23.60px;top:326.65px;font-size:7.5px;font-weight:normal;color:#141414;font-family:'DejaVu Sans','Liberation Sans',sans-serif;letter-spacing:-0.095px;">Labour</span>
<span class="t" style="left:205.40px;top:341.25px;font-size:7.5px;font-weight:normal;color:#2a4a72;font-family:'DejaVu Sans','Liberation Sans',sans-serif;letter-spacing:0.045px;">Craft</span>
<span class="t" style="left:228.40px;top:341.25px;font-size:7.5px;font-weight:normal;color:#1b4384;font-family:'DejaVu Sans','Liberation Sans',sans-serif;letter-spacing:0.074px;">Engineer</span>
<span class="t" style="left:151.00px;top:359.86px;font-size:7.5px;font-weight:normal;color:#2a4a72;font-family:'DejaVu Sans','Liberation Sans',sans-serif;letter-spacing:0.072px;">Optimum Resource</span>
<span class="t" style="left:227.80px;top:355.25px;font-size:7.5px;font-weight:normal;color:#12376f;font-family:'DejaVu Sans','Liberation Sans',sans-serif;letter-spacing:-0.068px;">pniemiec</span>
<span class="t" style="left:227.00px;top:364.65px;font-size:7.5px;font-weight:normal;color:#2d6a9a;font-family:'DejaVu Sans','Liberation Sans',sans-serif;letter-spacing:-0.023px;">niemiec ppp</span>
<span class="t" style="left:165.00px;top:377.65px;font-size:7.5px;font-weight:normal;color:#2a4a72;font-family:'DejaVu Sans','Liberation Sans',sans-serif;letter-spacing:0.026px;">Estimated Time</span>
<span class="t" style="left:227.80px;top:377.65px;font-size:7.5px;font-weight:normal;color:#12376f;font-family:'DejaVu Sans','Liberation Sans',sans-serif;letter-spacing:-0.002px;">6h0m</span>
<span class="t" style="left:22.00px;top:405.65px;font-size:7.5px;font-weight:normal;color:#141414;font-family:'DejaVu Sans','Liberation Sans',sans-serif;letter-spacing:-0.039px;">Costs</span>
<span class="t" style="left:63.00px;top:426.25px;font-size:7.5px;font-weight:normal;color:#2a4a72;font-family:'DejaVu Sans','Liberation Sans',sans-serif;letter-spacing:0.010px;">Account Code</span>
<span class="t" style="left:119.40px;top:422.15px;font-size:7.5px;font-weight:normal;color:#12376f;font-family:'DejaVu Sans','Liberation Sans',sans-serif;letter-spacing:0.037px;">Internal</span>
<span class="t" style="left:118.40px;top:432.86px;font-size:7.5px;font-weight:normal;color:#2d6a9a;font-family:'DejaVu Sans','Liberation Sans',sans-serif;letter-spacing:0.080px;">Internal Costs</span>
<span class="t" style="left:89.00px;top:446.25px;font-size:7.5px;font-weight:normal;color:#2a4a72;font-family:'DejaVu Sans','Liberation Sans',sans-serif;letter-spacing:0.005px;">Labour</span>
<span class="t" style="left:119.20px;top:446.25px;font-size:7.5px;font-weight:normal;color:#7d7d7d;font-family:'DejaVu Sans','Liberation Sans',sans-serif;letter-spacing:-0.600px;">£</span>
<span class="t" style="left:196.20px;top:446.25px;font-size:7.5px;font-weight:normal;color:#12376f;font-family:'DejaVu Sans','Liberation Sans',sans-serif;letter-spacing:0.074px;">0.00</span>
<span class="t" style="left:350.60px;top:446.25px;font-size:7.5px;font-weight:normal;color:#2a4a72;font-family:'DejaVu Sans','Liberation Sans',sans-serif;letter-spacing:0.001px;">Materials</span>
<span class="t" style="left:389.20px;top:446.25px;font-size:7.5px;font-weight:normal;color:#7d7d7d;font-family:'DejaVu Sans','Liberation Sans',sans-serif;letter-spacing:-0.600px;">£</span>
<span class="t" style="left:466.00px;top:446.25px;font-size:7.5px;font-weight:normal;color:#12376f;font-family:'DejaVu Sans','Liberation Sans',sans-serif;letter-spacing:0.074px;">0.00</span>
<span class="t" style="left:597.60px;top:446.25px;font-size:7.5px;font-weight:normal;color:#2a4a72;font-family:'DejaVu Sans','Liberation Sans',sans-serif;letter-spacing:0.012px;">Other Costs</span>
<span class="t" style="left:646.60px;top:446.25px;font-size:7.5px;font-weight:normal;color:#7d7d7d;font-family:'DejaVu Sans','Liberation Sans',sans-serif;letter-spacing:-0.600px;">£</span>
<span class="t" style="left:723.40px;top:446.25px;font-size:7.5px;font-weight:normal;color:#12376f;font-family:'DejaVu Sans','Liberation Sans',sans-serif;letter-spacing:0.074px;">0.00</span>
<span class="t" style="left:835.30px;top:446.25px;font-size:7.5px;font-weight:normal;color:#2a4a72;font-family:'DejaVu Sans','Liberation Sans',sans-serif;letter-spacing:0.234px;">Total</span>
<span class="t" style="left:858.20px;top:446.25px;font-size:7.5px;font-weight:normal;color:#e8141c;font-family:'DejaVu Sans','Liberation Sans',sans-serif;letter-spacing:-0.600px;">£</span>
<span class="t" style="left:935.00px;top:446.25px;font-size:7.5px;font-weight:normal;color:#e8141c;font-family:'DejaVu Sans','Liberation Sans',sans-serif;letter-spacing:0.074px;">0.00</span>
<span class="t" style="left:79.60px;top:479.25px;font-size:7.5px;font-weight:normal;color:#2a4a72;font-family:'DejaVu Sans','Liberation Sans',sans-serif;letter-spacing:0.014px;">Created By</span>
<span class="t" style="left:413.60px;top:479.25px;font-size:7.5px;font-weight:normal;color:#2a4a72;font-family:'DejaVu Sans','Liberation Sans',sans-serif;letter-spacing:-0.017px;">Date Created</span>
<span class="t" style="left:468.40px;top:479.25px;font-size:7.5px;font-weight:normal;color:#12376f;font-family:'DejaVu Sans','Liberation Sans',sans-serif;letter-spacing:0.188px;">2016-09-26 11:23</span>
<span class="t" style="left:744.40px;top:479.25px;font-size:7.5px;font-weight:normal;color:#2a4a72;font-family:'DejaVu Sans','Liberation Sans',sans-serif;letter-spacing:0.010px;">Last Changed</span>
<span class="t" style="left:800.20px;top:479.25px;font-size:7.5px;font-weight:normal;color:#12376f;font-family:'DejaVu Sans','Liberation Sans',sans-serif;letter-spacing:0.200px;">2016-09-26 11:23</span>
</div>
</body></html>
